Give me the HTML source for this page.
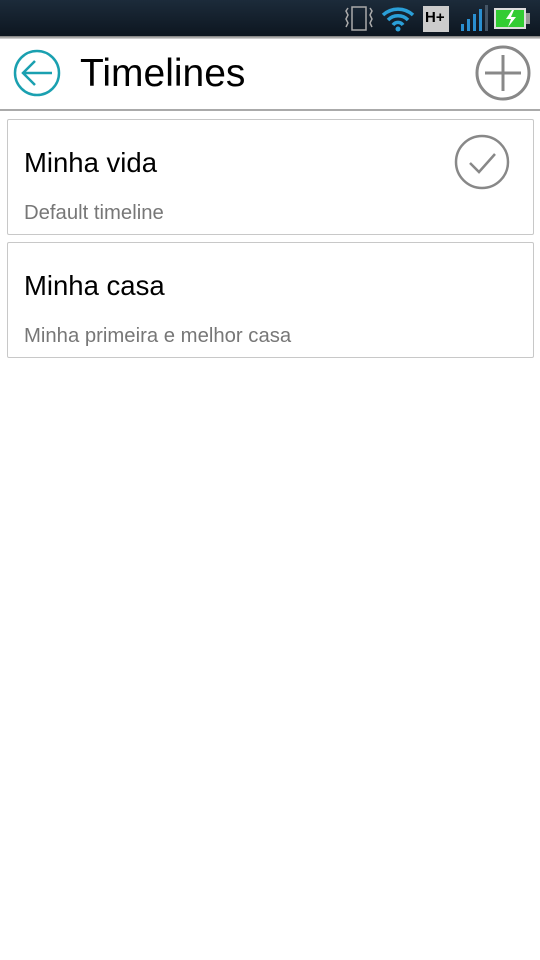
<!DOCTYPE html>
<html><head><meta charset="utf-8"><style>
body{margin:0;width:540px;height:960px;background:#fff;font-family:"Liberation Sans",sans-serif;position:relative;overflow:hidden}
.sb{position:absolute;left:0;top:0;width:540px;height:36px;background:linear-gradient(#1c2b3a,#0d1620)}
.sbl{position:absolute;top:36px;left:0;width:540px;height:3px;background:linear-gradient(#777,#ddd)}
.title{position:absolute;left:80px;top:52px;font-size:39px;color:#000}
.hl{position:absolute;left:0;top:109px;width:540px;height:2px;background:#aaa}
.card{position:absolute;left:7px;width:525px;height:114px;border:1px solid #c8c8c8;border-radius:2px}
.t{position:absolute;left:16px;top:27px;font-size:27.5px;color:#000}
.s{position:absolute;left:16px;top:82px;font-size:20.3px;color:#777}
</style></head><body>
<div class="sb">
<svg width="540" height="36" style="position:absolute;left:0;top:0">
<rect x="352" y="7" width="14" height="23" fill="none" stroke="#aaa" stroke-width="1.5"/>
<path d="M348 8l-2 3 2 4-2 4 2 4-2 4" fill="none" stroke="#aaa" stroke-width="1.5"/>
<path d="M370 8l2 3-2 4 2 4-2 4 2 4" fill="none" stroke="#aaa" stroke-width="1.5"/>
<path d="M383 15a22 22 0 0 1 30 0M388 20a14 14 0 0 1 20 0M393 25a6 6 0 0 1 10 0" fill="none" stroke="#2a9fd8" stroke-width="3.5"/>
<circle cx="398" cy="29" r="2.5" fill="#2a9fd8"/>
<rect x="423" y="6" width="26" height="26" fill="#ccc"/>
<text x="425" y="22" font-family="Liberation Sans" font-weight="bold" font-size="15" fill="#000">H+</text>
<rect x="461" y="24" width="3" height="7" fill="#2a8fd0"/><rect x="467" y="19" width="3" height="12" fill="#2a8fd0"/><rect x="473" y="14" width="3" height="17" fill="#2a8fd0"/><rect x="479" y="9" width="3" height="22" fill="#2a8fd0"/><rect x="485" y="5" width="3" height="26" fill="#456"/>
<rect x="494" y="8" width="32" height="21" fill="#ddd"/><rect x="496" y="10" width="28" height="17" fill="#3c3"/><rect x="526" y="13" width="4" height="11" fill="#999"/>
<path d="M512 10l-6 9h5l-3 8 8-10h-5l3-7z" fill="#fff"/>
</svg></div>
<div class="sbl"></div>
<svg width="540" height="110" style="position:absolute;left:0;top:0">
<circle cx="37" cy="73" r="22" fill="none" stroke="#1aa0b0" stroke-width="2.5"/>
<path d="M52 73H24M35 61L23 73l12 12" fill="none" stroke="#1aa0b0" stroke-width="2.5"/>
<circle cx="503" cy="73" r="26" fill="none" stroke="#888" stroke-width="3"/>
<path d="M503 55v36M485 73h36" stroke="#888" stroke-width="3"/>
</svg>
<div class="title">Timelines</div>
<div class="hl"></div>
<div class="card" style="top:119px"><div class="t">Minha vida</div><div class="s">Default timeline</div>
<svg width="60" height="60" style="position:absolute;left:444px;top:12px"><circle cx="30" cy="30" r="26" fill="none" stroke="#888" stroke-width="2.5"/><path d="M18 31l9 9 16-18" fill="none" stroke="#888" stroke-width="2.5"/></svg></div>
<div class="card" style="top:242px"><div class="t">Minha casa</div><div class="s">Minha primeira e melhor casa</div></div>
</body></html>
